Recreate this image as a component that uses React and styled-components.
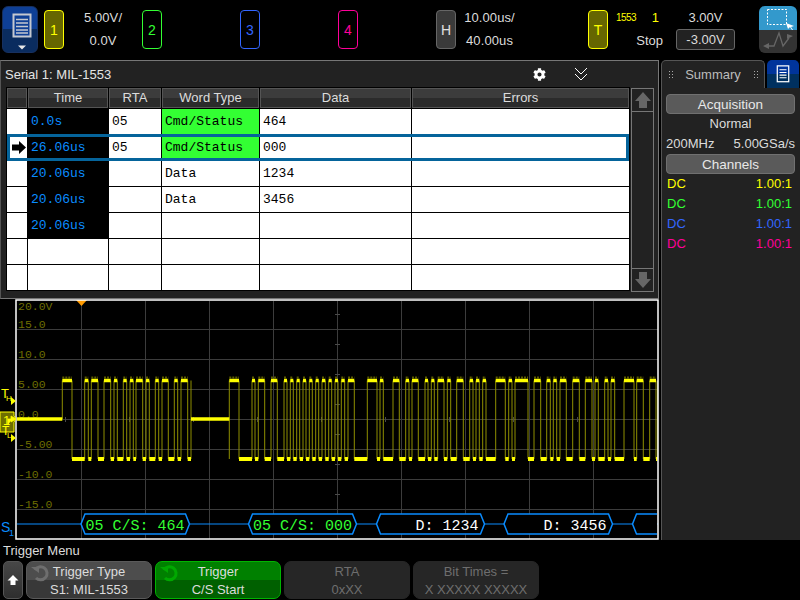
import React from 'react';
import styled, { createGlobalStyle } from 'styled-components';
import { FaCog } from 'react-icons/fa';

const YELLOW = '#ffff00';
const GREEN = '#33ff33';
const BLUE = '#3366ff';
const PINK = '#ff0099';
const BUS = '#0a8cff';

const GlobalStyle = createGlobalStyle`
  html, body { margin: 0; padding: 0; background: #000; }
  * { box-sizing: border-box; }
`;

// low pulses of the decoded MIL-1553 trace, as x ranges on screen
const LOWS = [
  [72, 84.7], [88.3, 91.3], [98, 104], [110.7, 114], [117.3, 123.3], [126.7, 130], [133.3, 136],
  [142.7, 146], [149.3, 155.3], [158.7, 162], [168.3, 174.3], [177.7, 181], [187.7, 191],
  [239, 252], [255, 258.3], [264.7, 271], [277.3, 284], [287, 290.3], [293.3, 296.7], [299.7, 303],
  [306, 309.3], [312.3, 315.7], [318.7, 322], [325.3, 328.7], [331.7, 335], [338, 341.3], [344.7, 348],
  [354.3, 367.3], [377, 380], [383.3, 393], [399.3, 405.7], [409, 412], [418.3, 425], [428, 431.3],
  [434.3, 437.7], [444, 447.3], [450.7, 456.7], [463.3, 469.7], [473, 476], [479.3, 482.7], [486, 495.7],
  [505.3, 508.7], [512, 515], [528, 534], [540.7, 546.7], [550.3, 553.3], [556.7, 560], [566.3, 572.7],
  [579.3, 585.3], [592, 595], [598.3, 604.7], [608, 611], [614.7, 624], [634, 636.7], [643.3, 649.7], [656, 657.5],
];
const HIGH_Y = 380.5;
const LOW_Y = 459;
const MID_Y = 419;

function buildTrace() {
  const highs = [];
  const edges = [];
  let x = 62.3;
  LOWS.forEach(([from, to], i) => {
    if (i === 13) {
      // idle gap between the command word and the next one
      highs.push([229.3, from]);
      edges.push(229.3);
    } else {
      highs.push([x, from]);
    }
    edges.push(from, to);
    x = to;
  });
  return { highs, edges };
}

const trace = buildTrace();

const Screen = styled.div`
  width: 800px;
  height: 600px;
  background: #000;
  display: flex;
  flex-direction: column;
  overflow: hidden;
  color: #dcdcdc;
  font-family: "Liberation Sans", Arial, sans-serif;
  font-size: 13px;
`;

const TopBar = styled.div`
  height: 60px;
  display: flex;
  align-items: flex-start;
`;

const MenuButton = styled.div`
  width: 36px;
  height: 47px;
  margin: 6px 6px 0 2px;
  border-radius: 6px;
  border: 1px solid #17305f;
  background: linear-gradient(#0e3f95 0, #0e3f95 48%, #0a2c5f 48%, #0a2c5f 100%);
`;

const ChannelGroup = styled.div`
  width: 98px;
  display: flex;
`;

const Tile = styled.div`
  width: 20px;
  height: 39px;
  margin-top: 10px;
  border-radius: 4px;
  border: 1px solid ${(p) => p.$color};
  color: ${(p) => p.$color};
  background: ${(p) => p.$fill || '#000'};
  display: flex;
  align-items: center;
  justify-content: center;
  font-size: 14px;
`;

const Readout = styled.div`
  width: ${(p) => p.$width || 78}px;
  padding-top: 6px;
  line-height: 23px;
  text-align: center;
  letter-spacing: 0.1px;
`;

const HorizontalGroup = styled.div`
  width: 152px;
  display: flex;
`;

const TriggerStatus = styled.div`
  width: 60px;
  margin-left: 8px;
  padding: 6px 13px 0 0;
  line-height: 23px;
`;

const StatusTop = styled.div`
  display: flex;
  justify-content: space-between;
  align-items: center;
  padding-right: 4px;
  height: 23px;
  color: ${YELLOW};
`;

const TinyLabel = styled.span`
  font-size: 10px;
  letter-spacing: -0.6px;
`;

const StatusStop = styled.div`
  text-align: right;
`;

const TriggerLevel = styled.div`
  width: 59px;
  padding-top: 6px;
  text-align: center;
  line-height: 23px;
`;

const LevelBox = styled.div`
  height: 21px;
  line-height: 19px;
  border: 1px solid #666;
  border-radius: 3px;
  background: #222;
`;

const ModeButtons = styled.div`
  width: 38px;
  height: 47px;
  margin: 6px 0 0 24px;
  border-radius: 6px;
  overflow: hidden;
  display: flex;
  flex-direction: column;
`;

const ModeTop = styled.div`
  height: 24px;
  background: #3399cc;
  display: flex;
`;

const ModeBottom = styled.div`
  height: 23px;
  background: #333;
  display: flex;
`;

const Main = styled.div`
  height: 480px;
  display: flex;
`;

const LeftColumn = styled.div`
  width: 660px;
  display: flex;
  flex-direction: column;
`;

const SerialPanel = styled.div`
  width: 659px;
  height: 239px;
  background: #222;
  border: 1px solid #777;
  border-left-color: #555;
  flex-shrink: 0;
`;

const PanelTitle = styled.div`
  height: 26px;
  display: flex;
  align-items: center;
  padding-left: 4px;
  color: #e4e4e4;
`;

const TitleText = styled.div`
  width: 527px;
`;

const TitleIcons = styled.div`
  display: flex;
  align-items: center;
  color: #fff;
`;

const IconSlot = styled.div`
  width: ${(p) => p.$width}px;
  display: flex;
  justify-content: center;
`;

const PanelBody = styled.div`
  display: flex;
  padding-left: 5px;
  gap: 1px;
`;

const Table = styled.div`
  width: 624px;
  height: 204px;
  padding: 1px;
  background: #000;
  display: flex;
  flex-direction: column;
  gap: 1px;
  color: #000;
`;

const Row = styled.div`
  position: relative;
  display: grid;
  grid-template-columns: 20px 80px 52px 97px 151px 217px;
  column-gap: 1px;
  height: ${(p) => (p.$header ? 20 : 25)}px;

  ${(p) => p.$selected && `
    &::after {
      content: '';
      position: absolute;
      inset: -1px 0;
      border: 3px solid #05649b;
      pointer-events: none;
    }
  `}
`;

const HeadCell = styled.div`
  background: linear-gradient(#3c3c3c 0, #3c3c3c 50%, #2b2b2b 50%, #2b2b2b 100%);
  border: 1px solid #555;
  color: #dcdcdc;
  text-align: center;
  line-height: 18px;
`;

const Cell = styled.div`
  background: ${(p) => p.$bg || '#fff'};
  color: ${(p) => p.$color || '#000'};
  font-family: "Liberation Mono", "Courier New", monospace;
  font-size: 13px;
  line-height: 25px;
  padding-left: 3px;
  white-space: pre;
  display: flex;
  align-items: center;
`;

const ScrollBar = styled.div`
  width: 23px;
  height: 204px;
  margin-top: 1px;
  border: 1px solid #777;
  display: flex;
  flex-direction: column;
  justify-content: space-between;
`;

const ScrollCell = styled.div`
  height: 23px;
  display: flex;
  align-items: center;
  justify-content: center;
  border-${(p) => (p.$end ? 'top' : 'bottom')}: 1px solid #777;
`;

const Scope = styled.svg`
  display: block;
  flex-shrink: 0;
`;

const SidePanel = styled.div`
  width: 140px;
  display: flex;
  flex-direction: column;
`;

const TabRow = styled.div`
  height: 28px;
  display: flex;
  gap: 2px;
`;

const SummaryTab = styled.div`
  width: 104px;
  margin-left: 1px;
  background: #222;
  border: 1px solid #555;
  border-bottom: 0;
  border-radius: 5px 5px 0 0;
  display: flex;
  align-items: center;
  justify-content: space-between;
  padding: 0 6px;
  color: #bcbcbc;
`;

const GripDots = styled.span`
  width: 5px;
  height: 9px;
  background-image: radial-gradient(#aaa 0.8px, transparent 1px);
  background-size: 3px 3px;
`;

const BlueTab = styled.div`
  width: 32px;
  border-radius: 5px 5px 0 0;
  background: linear-gradient(#00349b 0, #00349b 50%, #00305f 50%, #00305f 100%);
  display: flex;
  align-items: center;
  justify-content: center;
`;

const SideBody = styled.div`
  flex: 1;
  margin-left: 1px;
  background: #222;
  border-left: 1px solid #555;
  padding: 6px 5px 0 4px;
`;

const SectionButton = styled.div`
  height: 20px;
  line-height: 19px;
  border-radius: 4px;
  border: 1px solid #707070;
  background: #5a5a5a;
  text-align: center;
  color: #e8e8e8;
  font-size: 13.5px;
`;

const SideLine = styled.div`
  height: 20px;
  line-height: 20px;
  text-align: center;
  white-space: nowrap;
  display: flex;
  justify-content: ${(p) => (p.$spread ? 'space-between' : 'center')};
`;

const ChannelLine = styled.div`
  height: 20px;
  line-height: 20px;
  display: flex;
  justify-content: space-between;
  padding: 0 3px 0 1px;
  color: ${(p) => p.$color};
`;

const BottomBar = styled.div`
  height: 60px;
`;

const MenuLabel = styled.div`
  height: 21px;
  line-height: 21px;
  padding-left: 3px;
  color: #dcdcdc;
`;

const KeyRow = styled.div`
  display: flex;
  gap: 3px;
  padding-left: 3px;
`;

const BackKey = styled.div`
  width: 20px;
  height: 38px;
  border-radius: 5px;
  border: 1px solid #555;
  background: linear-gradient(#474747, #2e2e2e);
  display: flex;
  align-items: center;
  justify-content: center;
`;

const KEY_STYLES = {
  normal: 'border: 1px solid #5a5a5a; background: linear-gradient(#4d4d4d 0, #4d4d4d 50%, #383838 50%, #383838 100%); color: #dcdcdc;',
  active: 'border: 1px solid #00b400; background: linear-gradient(#008000 0, #008000 50%, #006000 50%, #006000 100%); color: #dcdcdc;',
  off: 'border: 1px solid #262626; background: #262626; color: #6e6e6e;',
};

const SoftKey = styled.div`
  position: relative;
  width: 126px;
  height: 38px;
  border-radius: 7px;
  ${(p) => KEY_STYLES[p.$kind]}
  text-align: center;
  line-height: 18px;
  padding-top: 1px;
`;

const KeyIcon = styled.svg`
  position: absolute;
  left: 3px;
  top: 2px;
`;

const TABLE_ROWS = [
  { time: '0.0s', rta: '05', type: 'Cmd/Status', data: '464' },
  { time: '26.06us', rta: '05', type: 'Cmd/Status', data: '000', selected: true },
  { time: '20.06us', rta: '', type: 'Data', data: '1234' },
  { time: '20.06us', rta: '', type: 'Data', data: '3456' },
  { time: '20.06us', rta: '', type: '', data: '' },
  { time: '', rta: '', type: '', data: '' },
  { time: '', rta: '', type: '', data: '' },
];

const CHANNELS = [YELLOW, GREEN, BLUE, PINK];

const GRID_X = [81.5, 145.5, 209.5, 273.5, 337.5, 401.5, 465.5, 529.5, 593.5];
const GRID_Y = [329.5, 359.5, 389.5, 419.5, 449.5, 479.5, 509.5];
const VOLT_LABELS = [
  ['20.0V', 310], ['15.0', 328], ['10.0', 358], ['5.00', 388], ['0.0', 418],
  ['-5.00', 448], ['-10.0', 478], ['-15.0', 508],
];
const BUS_WORDS = [
  { from: 81, to: 189.5, text: '05 C/S: 464', color: GREEN },
  { from: 248.5, to: 356.5, text: '05 C/S: 000', color: GREEN },
  { from: 376.5, to: 484.5, text: 'D: 1234', color: '#fff', right: true },
  { from: 504, to: 612.5, text: 'D: 3456', color: '#fff', right: true },
  { from: 632.5, to: 740, text: '', color: '#fff' },
];

function DocIcon({ size = 18, stroke = '#fff' }) {
  return (
    <svg width={size} height={size * 1.1} viewBox="0 0 18 20">
      <rect x="2.5" y="1" width="13" height="18" fill="none" stroke={stroke} strokeWidth="1.4" />
      <path d="M5 5.5h8M5 8.5h8M5 11.5h8M5 14.5h8" stroke={stroke} strokeWidth="1.2" />
    </svg>
  );
}

function MenuIcon() {
  return (
    <svg width="34" height="45" viewBox="0 0 34 45">
      <rect x="10.5" y="7.5" width="17" height="22" fill="#0e3f95" stroke="#c4c8d0" strokeWidth="2" />
      <path d="M13 12.5h12M13 16h12M13 19.5h12M13 23h12M13 26h12" stroke="#c4c8d0" strokeWidth="1.4" />
      <path d="M15 38.5h8l-4 4z" fill="#e8e8e8" />
    </svg>
  );
}

function Chevrons({ up }) {
  const d = up ? 'M1 7l6-6 6 6M1 13l6-6 6 6' : 'M1 1l6 6 6-6M1 7l6 6 6-6';
  return (
    <svg width="14" height="14" viewBox="0 0 14 14">
      <path d={d} fill="none" stroke="#fff" strokeWidth="1" />
    </svg>
  );
}

function BigArrow({ down }) {
  return (
    <svg width="16" height="16" viewBox="0 0 16 16">
      <path d={down ? 'M4 0h8v7h4l-8 9-8-9h4z' : 'M8 0l8 9h-4v7H4V9H0z'} fill="#666" />
    </svg>
  );
}

function RefreshIcon({ color }) {
  return (
    <KeyIcon width="20" height="18" viewBox="0 0 20 18">
      <path d="M5 6a6.5 6.5 0 1 1 1 8" fill="none" stroke={color} strokeWidth="3" />
      <path d="M1 3h8v6z" fill={color} />
    </KeyIcon>
  );
}

function ScopeView() {
  return (
    <Scope width="660" height="241" viewBox="0 299 660 241">
      <rect x="16" y="300" width="642" height="239" fill="#000" />
      {GRID_X.map((x) => <line key={x} x1={x} x2={x} y1="301" y2="539" stroke="#3c3c3c" />)}
      {GRID_Y.map((y) => <line key={y} x1="17" x2="658" y1={y} y2={y} stroke="#3c3c3c" />)}
      {GRID_X.map((x) => <line key={x} x1={x - 16} x2={x - 16} y1="417" y2="422" stroke="#4a4a4a" />)}
      {GRID_Y.map((y) => <line key={y} x1="335" x2="340" y1={y - 15} y2={y - 15} stroke="#4a4a4a" />)}

      {VOLT_LABELS.map(([label, y]) => (
        <text key={label} x="18" y={y} fill="#6e6e00" fontFamily="Liberation Mono, monospace" fontSize="11.5">{label}</text>
      ))}

      <path d="M76 300h11l-5.5 6z" fill="#ff9a00" />

      {trace.edges.map((x, i) => (
        <line key={i} x1={x} x2={x} y1={HIGH_Y} y2={LOW_Y} stroke="#8f8f00" />
      ))}
      <line x1="62.3" x2="62.3" y1={HIGH_Y} y2={MID_Y} stroke="#8f8f00" />
      {trace.highs.map(([from, to], i) => (
        <g key={i}>
          <line x1={from} x2={to} y1={HIGH_Y - 3} y2={HIGH_Y - 3} stroke="#5a5a00" strokeWidth="2" strokeDasharray="2 1" />
          <line x1={from} x2={to} y1={HIGH_Y} y2={HIGH_Y} stroke={YELLOW} strokeWidth="3.5" />
        </g>
      ))}
      {LOWS.map(([from, to], i) => (
        <line key={i} x1={from} x2={to} y1={LOW_Y} y2={LOW_Y} stroke={YELLOW} strokeWidth="4" />
      ))}
      <line x1="17" x2="62.3" y1={MID_Y} y2={MID_Y} stroke={YELLOW} strokeWidth="3.5" />
      <line x1="191" x2="229.3" y1={MID_Y} y2={MID_Y} stroke={YELLOW} strokeWidth="3.5" />

      <line x1="17" x2="658" y1="524" y2="524" stroke={BUS} strokeWidth="1.2" />
      <clipPath id="bus-clip"><rect x="17" y="505" width="640" height="33" /></clipPath>
      <g clipPath="url(#bus-clip)">
        {BUS_WORDS.map((w) => (
          <g key={w.from}>
            <path
              d={`M${w.from} 524l4-10H${w.to - 4}l4 10-4 10H${w.from + 4}z`}
              fill="#000"
              stroke={BUS}
              strokeWidth="1.5"
            />
            <text
              x={w.right ? w.to - 6 : w.from + 4.5}
              y="529.5"
              textAnchor={w.right ? 'end' : 'start'}
              fill={w.color}
              fontFamily="Liberation Mono, monospace"
              fontSize="15"
            >
              {w.text}
            </text>
          </g>
        ))}
      </g>

      <rect x="16" y="300" width="642" height="239" fill="none" stroke="#fff" strokeWidth="1.5" />

      <text x="1" y="398" fill={YELLOW} fontFamily="Liberation Sans, sans-serif" fontSize="13">T</text>
      <text x="6" y="401" fill={YELLOW} fontFamily="Liberation Sans, sans-serif" fontSize="8">H</text>
      <path d="M11 397l5 4-5 4z" fill={YELLOW} />
      <path d="M0 412h14v4l2 3-2 3v10H0z" fill="#6e6e00" stroke={YELLOW} />
      <text x="3" y="425" fill={YELLOW} fontFamily="Liberation Sans, sans-serif" fontSize="13">1</text>
      <path d="M8 425v-6h4M11 416l5 3-5 3z" fill={YELLOW} stroke={YELLOW} strokeWidth="0.8" />
      <text x="2" y="435" fill={YELLOW} fontFamily="Liberation Sans, sans-serif" fontSize="12">T</text>
      <text x="7" y="438" fill={YELLOW} fontFamily="Liberation Sans, sans-serif" fontSize="8">L</text>
      <path d="M11 434l5 4-5 4z" fill={YELLOW} />

      <text x="1" y="532" fill={BUS} fontFamily="Liberation Sans, sans-serif" fontSize="14">S</text>
      <text x="9" y="536" fill={BUS} fontFamily="Liberation Sans, sans-serif" fontSize="9">1</text>
    </Scope>
  );
}

export default function App() {
  return (
    <Screen>
      <GlobalStyle />
      <TopBar>
        <MenuButton><MenuIcon /></MenuButton>
        {CHANNELS.map((color, i) => (
          <ChannelGroup key={color}>
            <Tile $color={color} $fill={i === 0 ? '#666600' : undefined}>{i + 1}</Tile>
            {i === 0 && <Readout>5.00V/<br />0.0V</Readout>}
          </ChannelGroup>
        ))}
        <HorizontalGroup>
          <Tile $color="#666" $fill="#3a3a3a"><span style={{ color: '#e0e0e0' }}>H</span></Tile>
          <Readout $width={67}>10.00us/<br />40.00us</Readout>
        </HorizontalGroup>
        <Tile $color={YELLOW} $fill="#666600">T</Tile>
        <TriggerStatus>
          <StatusTop><TinyLabel>1553</TinyLabel><span>1</span></StatusTop>
          <StatusStop>Stop</StatusStop>
        </TriggerStatus>
        <TriggerLevel>
          3.00V
          <LevelBox>-3.00V</LevelBox>
        </TriggerLevel>
        <ModeButtons>
          <ModeTop>
            <svg width="38" height="24" viewBox="0 0 38 24">
              <rect x="8.5" y="3.5" width="19" height="15" fill="none" stroke="#fff" strokeDasharray="2 1.5" />
              <path d="M27 17l8 3-3 1 2 3-1 0-2-3-2 2z" fill="#fff" />
            </svg>
          </ModeTop>
          <ModeBottom>
            <svg width="38" height="23" viewBox="0 0 38 23">
              <path d="M7 16h8l5-13 4 13 6-8" fill="none" stroke="#666" strokeWidth="1.3" />
              <path d="M4 16l6-3v6zM34 6l-6-2v5z" fill="#666" />
            </svg>
          </ModeBottom>
        </ModeButtons>
      </TopBar>

      <Main>
        <LeftColumn>
          <SerialPanel>
            <PanelTitle>
              <TitleText>Serial 1: MIL-1553</TitleText>
              <TitleIcons>
                <IconSlot $width={14}><FaCog size={13} /></IconSlot>
                <IconSlot $width={70}><Chevrons /></IconSlot>
                <IconSlot $width={0}><Chevrons up /></IconSlot>
              </TitleIcons>
            </PanelTitle>
            <PanelBody>
              <Table>
                <Row $header>
                  <HeadCell />
                  <HeadCell>Time</HeadCell>
                  <HeadCell>RTA</HeadCell>
                  <HeadCell>Word Type</HeadCell>
                  <HeadCell>Data</HeadCell>
                  <HeadCell>Errors</HeadCell>
                </Row>
                {TABLE_ROWS.map((row, i) => (
                  <Row key={i} $selected={row.selected}>
                    <Cell>
                      {row.selected && (
                        <svg width="14" height="13" viewBox="0 0 14 13" style={{ marginLeft: 2 }}>
                          <path d="M0 3.5h7V0l7 6.500-7 6.500V9.500H0z" fill="#000" />
                        </svg>
                      )}
                    </Cell>
                    <Cell $bg={row.time ? '#000' : '#fff'} $color={BUS}>{row.time}</Cell>
                    <Cell>{row.rta}</Cell>
                    <Cell $bg={row.type === 'Cmd/Status' ? GREEN : '#fff'}>{row.type}</Cell>
                    <Cell>{row.data}</Cell>
                    <Cell />
                  </Row>
                ))}
              </Table>
              <ScrollBar>
                <ScrollCell><BigArrow /></ScrollCell>
                <ScrollCell $end><BigArrow down /></ScrollCell>
              </ScrollBar>
            </PanelBody>
          </SerialPanel>
          <ScopeView />
        </LeftColumn>

        <SidePanel>
          <TabRow>
            <SummaryTab><GripDots />Summary<GripDots /></SummaryTab>
            <BlueTab><DocIcon size={16} /></BlueTab>
          </TabRow>
          <SideBody>
            <SectionButton>Acquisition</SectionButton>
            <SideLine>Normal</SideLine>
            <SideLine $spread><span>200MHz</span><span>5.00GSa/s</span></SideLine>
            <SectionButton>Channels</SectionButton>
            {CHANNELS.map((color) => (
              <ChannelLine key={color} $color={color}><span>DC</span><span>1.00:1</span></ChannelLine>
            ))}
          </SideBody>
        </SidePanel>
      </Main>

      <BottomBar>
        <MenuLabel>Trigger Menu</MenuLabel>
        <KeyRow>
          <BackKey>
            <svg width="12" height="12" viewBox="0 0 12 12">
              <path d="M6 1l5.500 5.500H8.500V11h-5V6.500H.5z" fill="#fff" />
            </svg>
          </BackKey>
          <SoftKey $kind="normal">
            <RefreshIcon color="#6e6e6e" />
            Trigger Type<br />S1: MIL-1553
          </SoftKey>
          <SoftKey $kind="active">
            <RefreshIcon color="#00a800" />
            Trigger<br />C/S Start
          </SoftKey>
          <SoftKey $kind="off">RTA<br />0xXX</SoftKey>
          <SoftKey $kind="off">Bit Times =<br />X XXXXX XXXXX</SoftKey>
        </KeyRow>
      </BottomBar>
    </Screen>
  );
}
